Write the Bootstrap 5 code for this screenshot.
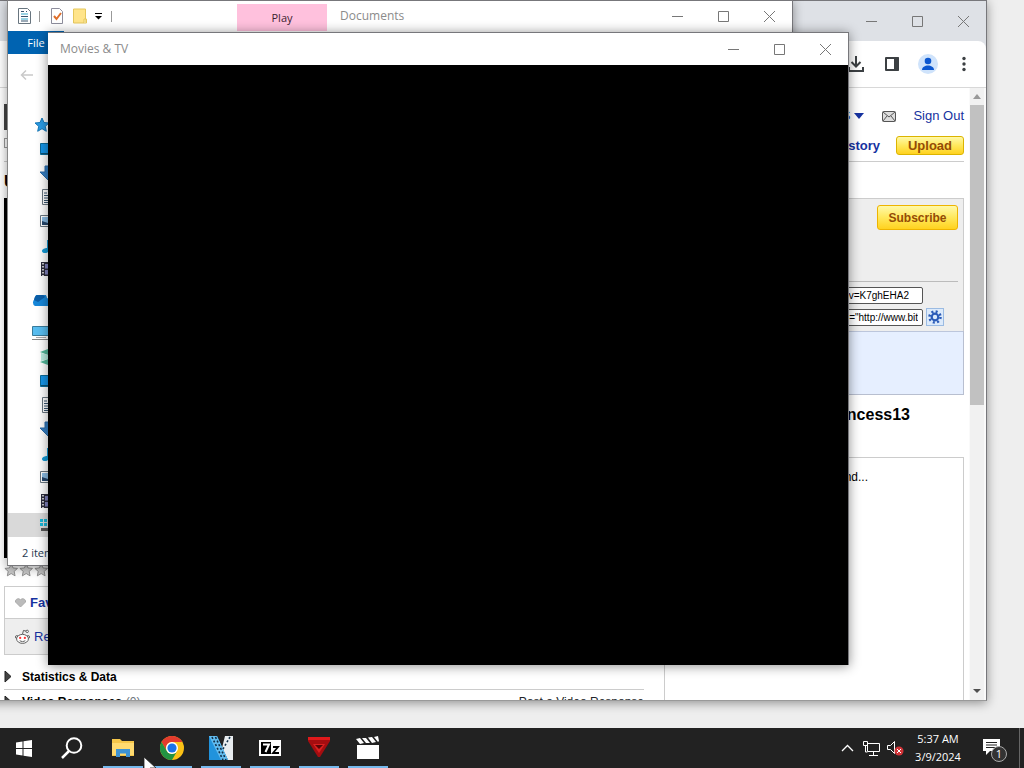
<!DOCTYPE html>
<html lang="en">
<head>
<meta charset="utf-8">
<meta name="viewport" content="width=device-width, initial-scale=1">
<title>Desktop</title>
<link rel="stylesheet" href="https://cdn.jsdelivr.net/npm/bootstrap@5.3.0/dist/css/bootstrap.min.css">
<style>
body{font-family:"Open Sans","Noto Sans",sans-serif;font-size:12px;line-height:16px;background:#eee;color:#000}
a{color:#1632a0;text-decoration:none}
.win{position:absolute;background:#fff;overflow:hidden;border:1px solid #77777b;box-shadow:0 2px 10px rgba(0,0,0,.4)}
.win-browser{left:-40px;top:0;width:1027px;height:701px;border-bottom-color:#999}
.win-files{left:7px;top:0;width:786px;height:566px;border-left-color:#888}
.win-movies{left:48px;top:32px;width:801px;height:633px;border-width:1px 1px 0 0;box-shadow:0 1px 11px rgba(0,0,0,.45)}
.ctl{width:46px;height:30px;border:0;background:none;padding:0;color:#777}
.ctl svg{display:block;margin:auto}
.title-text{color:#8b8b8b}
.movies-bar{height:32px}
/* browser */
.strip{height:40px;background:#dee1e6}
.tools{height:46px;background:#fff;border-radius:0 8px 0 0;padding-right:4px}
.tool{width:36px;height:36px;border:0;background:none;padding:0}
.page{font-family:"Liberation Sans",Arial,sans-serif;font-size:13px;border-top:1px solid #d8d8d8}
.page-body{padding:0 5px 0 43px}
.masthead{height:74px;border-bottom:1px solid #ccc}
.logo{width:90px;height:26px;background:#444;margin-top:16px}
.find{width:120px;height:10px;border:1px solid #999;margin-top:8px;padding:0}
.col-main{width:640px}
.col-side{width:300px}
.video{height:360px;background:#000}
.heading{font-size:16px;line-height:20px;height:36px;padding-top:10px}
.yellow{border:1px solid #dcb400;border-radius:3px;background:linear-gradient(#fff9a8,#ffe85c 50%,#ffd21f);color:#944b06;font-weight:700;padding:0;line-height:16px}
.upload{width:68px;height:19px}
.subscribe{width:81px;height:25px;font-size:12px;border-color:#eeb400}
.panel{margin-top:36px;border:1px solid #ccc;background:#eee}
.panel-top{height:83px;padding:6px 0 0;border-bottom:1px solid #bbb;margin-right:5px}
.codes{padding:5px 19px 5px 0}
.code{width:140px;height:17px;border:1px solid #555;border-radius:2px;font-size:10px;text-align:right;padding:0 4px 0 0;background:#fff;color:#000}
.code-link{padding-right:13px;margin-right:21px}
.embed{gap:3px;margin-top:4px}
.gear{width:18px;height:18px;border:1px solid #9bbbe2;background:#dceafb;padding:0}
.panel-blue{height:63px;border-top:1px solid #bcc6dc;background:#e6efff}
.panel-blue-wrap{margin:0 -1px -1px;border:1px solid #b8bfd0;border-top:0}
.name{font-size:16px;line-height:20px;padding:10px 54px 0 0;height:62px}
.box{border:1px solid #ccc;height:300px;font-size:12px;padding-top:11px;padding-left:163px}
.acts{border:1px solid #ccc}
.act{height:31px;padding-left:10px}
.act-grey{height:36px;background:#eee;border-top:1px solid #ccc}
.more{font-size:12px}
.stats{margin-top:6px;padding:8px 0 4px;border-bottom:1px solid #ccc}
.responses{padding-top:4px}
.stars{height:28px;padding-top:5px}
.track{width:17px;background:#f1f1f1;border-left:1px solid #fafafa;border-right:2px solid #fafafa}
.thumb{height:300px;background:#c1c1c1}
/* file explorer */
.quick{height:30px;padding-left:10px}
.check-icon{margin:0 10px 0 11px}
.sep{width:1px;height:11px;background:#999}
.play{width:90px;height:27px;background:#ffc1dd;color:#3d1f30;border:0;padding:0;font-size:11px}
.doc-title{width:327px;padding-left:13px}
.file-tab{width:56px;height:23px;background:#0063b1;color:#fff;border:0;padding:0;font-size:11px}
.back{height:59px;padding:12px 0 0 12px}
.tree{width:190px}
.tree .node{height:24px;padding-left:32px}
.tree .root{padding-left:24px}
.tree .chosen{background:#d9d9d9}
.status{padding:8px 0 0 14px;color:#26384f;font-size:11px}
.black{background:#000}
/* taskbar */
.bar{height:40px;background:#222;color:#fff;position:relative}
.tb{border:0;background:none;padding:0;color:#fff;display:flex;align-items:center;justify-content:center;height:40px}
.tb-sys{width:48px}
.apps{margin-left:2px}
.tb-app{width:49px;padding-left:1px}
.tb-app::after{content:"";position:absolute;bottom:0;width:40px;height:2px;background:#76b9ed}
.tb-tray{width:24px}
.clock{width:62px;font-size:11px;line-height:18px}
.tb-note{width:46px;padding:4px 0 0 5px}
.edge{width:5px;border-left:1px solid #666}
.pointer{position:absolute;left:143px;bottom:-8px;z-index:9}
</style>
</head>
<body>
<svg width="0" height="0" class="position-absolute" aria-hidden="true">
<defs>
<g id="doc"><path d="M1.500.5h8l3 3v12h-11z" fill="#fff" stroke="#68757f"/><path d="M3 4h3M3 6.500h8M3 9h8M3 11.500h8M7 4h3M3 13.500h8" stroke="#38556f"/></g>
<g id="desk"><path d="M.5 2.500h15v11H.5z" fill="#1695e8" stroke="#0b6a99"/><path d="M1 12.500h14" stroke="#0a5274"/></g>
<path id="down" d="M5 1h6v6h5l-8 8-8-8h5z" fill="#347fc4" stroke="#2869a7"/>
<g id="pic"><path d="M.5 2.500h15v11H.5z" fill="#fff" stroke="#68757f"/><path d="M2 4h12v8H2z" fill="#8bbce4"/><path d="M2 12V8l3 1 3 1 6-2v4z" fill="#24466c"/></g>
<path id="note" d="M7 3h2c0 4 5 3 5 8-1-3-3-3-5-3v5c0 4-7 4-7 1 0-2 3-3 5-3z" fill="#159bd7"/>
<g id="film"><path d="M0 1h16v14H0z" fill="#2b2b3b"/><path d="M4 3h8v4.500H4zM4 9h8v4.500H4z" fill="#8082bd"/><path d="M2 2v13M14 2v13" stroke="#fff" stroke-width="1.500" stroke-dasharray="1.500 1.500"/></g>
<path id="star" d="M8 1l2 4.500 5 .5-3.700 3.300 1 5L8 11.700 3.700 14.300l1-5L1 6l5-.5z"/>
<g id="min"><path d="M1 6.500h11"/></g><g id="max"><path d="M1.500 1.500h10v10h-10z"/></g><g id="cls"><path d="M1 1l11 11M12 1L1 12"/></g>
</defs>
</svg>

<div class="d-flex flex-column vh-100 overflow-hidden">
<main class="flex-grow-1 position-relative overflow-hidden">

<section class="win win-browser d-flex flex-column" aria-label="Browser">
  <div class="strip d-flex flex-shrink-0 justify-content-end align-items-center">
    <button class="ctl" aria-label="Minimize"><svg width="13" height="13" fill="none" stroke="currentColor"><use href="#min"/></svg></button>
    <button class="ctl" aria-label="Maximize"><svg width="13" height="13" fill="none" stroke="currentColor"><use href="#max"/></svg></button>
    <button class="ctl" aria-label="Close"><svg width="13" height="13" fill="none" stroke="currentColor"><use href="#cls"/></svg></button>
  </div>
  <div class="strip h-auto flex-shrink-0"><div class="tools d-flex justify-content-end align-items-center">
    <button class="tool" aria-label="Downloads"><svg width="20" height="20" fill="none" stroke="#3c4043" stroke-width="2"><path d="M10 2v10M5.500 8l4.500 4.500L14.500 8M3 13v4h14v-4"/></svg></button>
    <button class="tool" aria-label="Side panel"><svg width="20" height="20"><path d="M4 4h12v12H4z" fill="none" stroke="#3c4043" stroke-width="2" stroke-linejoin="round"/><path d="M12 3h4l1 1v12l-1 1h-4z" fill="#3c4043"/></svg></button>
    <button class="tool" aria-label="Profile"><svg width="20" height="20"><circle cx="10" cy="10" r="10" fill="#cfe3fb"/><circle cx="10" cy="7" r="3.300" fill="#0b57d0"/><path d="M4 16c0-3 3-4.500 6-4.500s6 1.500 6 4.500z" fill="#0b57d0"/></svg></button>
    <button class="tool" aria-label="Menu"><svg width="20" height="20" fill="#3c4043"><circle cx="10" cy="4.500" r="1.700"/><circle cx="10" cy="10" r="1.700"/><circle cx="10" cy="15.500" r="1.700"/></svg></button>
  </div></div>
  <div class="page d-flex flex-grow-1 overflow-hidden">
    <div class="page-body flex-grow-1 overflow-hidden">
      <header class="masthead d-flex justify-content-between">
        <div><div class="logo"></div><input class="find d-block" aria-label="Search"></div>
        <div>
          <div class="d-flex justify-content-end align-items-center pt-3 mt-1">
            <a href="#" class="me-1">S</a><svg width="12" height="6" class="me-3"><path d="M0 0h10L5 6z" fill="#1632a0"/></svg>
            <svg width="15" height="11" class="me-3"><rect x=".5" y=".5" width="13" height="10" rx="1" fill="#ddd" stroke="#555"/><path d="M1 1l6 5 6-5M1 10l4-5M13 10L9 5" fill="none" stroke="#555"/></svg>
            <a href="#">Sign Out</a>
          </div>
          <div class="d-flex justify-content-end align-items-center pt-2 mt-1 gap-3"><a href="#" class="fw-bold">History</a><button class="yellow upload">Upload</button></div>
        </div>
      </header>
      <div class="d-flex justify-content-between">
        <div class="col-main">
          <div class="heading fw-bold">U</div>
          <div class="video"></div>
          <div class="stars d-flex" aria-label="Rating">
            <svg width="15" height="16" fill="#ccc" stroke="#888"><use href="#star" transform="scale(.9)"/></svg><svg width="15" height="16" fill="#ccc" stroke="#888"><use href="#star" transform="scale(.9)"/></svg><svg width="15" height="16" fill="#ccc" stroke="#888"><use href="#star" transform="scale(.9)"/></svg>
          </div>
          <div class="acts">
            <div class="act d-flex align-items-center"><svg width="11" height="10" class="me-1"><path d="M5.500 9L.5 4C0 1 4-.5 5.500 2 7-.5 11 1 10.500 4z" fill="#bbb" stroke="#aaa"/></svg><a href="#" class="fw-semibold">Favorite</a></div>
            <div class="act act-grey d-flex align-items-center"><svg width="15" height="16" viewBox="0 0 16 16" class="me-1" fill="#fff" stroke="#555"><circle cx="2" cy="8" r="1.500"/><circle cx="14" cy="8" r="1.500"/><path d="M8 5l1-4 4 1" fill="none"/><circle cx="13" cy="2" r="1.300"/><ellipse cx="8" cy="10" rx="6.300" ry="4.800"/><circle cx="5.500" cy="9" r="1.200" fill="#f33" stroke="none"/><circle cx="10.500" cy="9" r="1.200" fill="#f33" stroke="none"/><path d="M5 12q3 2 6 0" fill="none"/></svg><a href="#">Reddit</a></div>
          </div>
          <div class="more stats d-flex align-items-center"><svg width="18" height="12"><path d="M1 0v11l6-5.500z" fill="#444" stroke="#222"/></svg><b>Statistics &amp; Data</b></div>
          <div class="more responses d-flex justify-content-between align-items-start"><div class="d-flex align-items-center"><svg width="18" height="12"><path d="M1 0v11l6-5.500z" fill="#444" stroke="#222"/></svg><b class="me-1">Video Responses</b> <span class="text-secondary">(0)</span></div><a href="#" class="text-dark">Post a Video Response</a></div>
        </div>
        <aside class="col-side">
          <div class="panel">
            <div class="panel-top text-end"><button class="yellow subscribe">Subscribe</button></div>
            <div class="codes">
              <div class="d-flex justify-content-end"><input class="code code-link" aria-label="URL" value="watch?v=K7ghEHA2"></div>
              <div class="embed d-flex align-items-center justify-content-end"><input class="code" aria-label="Embed" value="value=&quot;http://www.bit"><button class="gear" aria-label="Options"><svg width="14" height="14" class="d-block mx-auto" fill="none" stroke="#2b5bb8"><circle cx="7" cy="7" r="3.300" stroke-width="2.200"/><circle cx="7" cy="7" r="5.500" stroke-width="2.500" stroke-dasharray="2 2.320"/></svg></button></div>
            </div>
            <div class="panel-blue-wrap"><div class="panel-blue"></div></div>
          </div>
          <h2 class="name fw-bold m-0 text-end">princess13</h2>
          <div class="box">found...</div>
        </aside>
      </div>
    </div>
    <div class="track d-flex flex-column" aria-hidden="true">
      <svg width="14" height="17"><path d="M3 11h8L7 6z" fill="#999"/></svg><div class="thumb"></div><svg width="14" height="17" class="mt-auto"><path d="M3 6h8l-4 4z" fill="#505050"/></svg>
    </div>
  </div>
</section>

<section class="win win-files" aria-label="Documents">
  <div class="quick d-flex align-items-center">
    <svg width="13" height="16"><path d="M.5.500h9l3 3v12H.5z" fill="#fff" stroke="#68757f"/><path d="M3 3.500h3M3 8.500h7M3 13h7M8 3.500h1" stroke="#38556f"/><path d="M3 6h7M3 11h7" stroke="#36a9c9"/></svg>
    <span class="sep ms-2"></span>
    <svg width="12" height="16" class="check-icon"><path d="M.5.500h8l3 3v12H.5z" fill="#fff" stroke="#8d8d9c"/><path d="M3 8l2.500 3L10 5" fill="none" stroke="#df6f2c" stroke-width="2"/></svg>
    <svg width="14" height="16"><path d="M.5 1h12v10h1v4H.5z" fill="#ffe48a" stroke="#e5c75c"/><path d="M11 15v-4h2v4" fill="#fff2b5" stroke="#e5c75c"/></svg>
    <svg width="8" height="8" class="ms-2"><path d="M0 1.500h7" stroke="#000"/><path d="M0 4h7L3.500 7.500z"/></svg>
    <span class="sep ms-2"></span>
    <button class="play align-self-end ms-auto">Play</button>
    <span class="title-text doc-title">Documents</span>
    <button class="ctl" aria-label="Minimize"><svg width="13" height="13" fill="none" stroke="currentColor"><use href="#min"/></svg></button>
    <button class="ctl" aria-label="Maximize"><svg width="13" height="13" fill="none" stroke="currentColor"><use href="#max"/></svg></button>
    <button class="ctl" aria-label="Close"><svg width="13" height="13" fill="none" stroke="currentColor"><use href="#cls"/></svg></button>
  </div>
  <button class="file-tab d-block">File</button>
  <div class="back"><svg width="14" height="16" fill="none" stroke="#c9c9c9" stroke-width="1.500"><path d="M13 8H2M6 3.500L1.500 8 6 12.500"/></svg></div>
  <div class="tree">
    <div class="node root d-flex align-items-center"><svg width="19" height="16" fill="#2a9be4" stroke="#1678b8"><use href="#star" x="2"/></svg></div>
    <div class="node d-flex align-items-center"><svg width="16" height="16"><use href="#desk"/></svg></div>
    <div class="node d-flex align-items-center"><svg width="16" height="16"><use href="#down"/></svg></div>
    <div class="node d-flex align-items-center"><svg width="18" height="16"><use href="#doc" x="1"/></svg></div>
    <div class="node d-flex align-items-center"><svg width="16" height="16"><use href="#pic"/></svg></div>
    <div class="node d-flex align-items-center"><svg width="16" height="16"><use href="#note"/></svg></div>
    <div class="node d-flex align-items-center"><svg width="17" height="16"><use href="#film" x="1"/></svg></div>
    <div class="node root d-flex align-items-center mt-2"><svg width="20" height="12"><path d="M3 11a4 4 0 010-7 6 6 0 0112-1c5 1 5 8 1 8z" fill="#1687d9"/><path d="M2 5a6 6 0 0111-3L6 7z" fill="#0b5ea8"/></svg></div>
    <div class="node root d-flex align-items-center mt-2"><svg width="18" height="16"><path d="M.5 1.500h17v9H.5z" fill="#58bdf0" stroke="#397b9b"/><path d="M4 12.500h10" stroke="#aaa"/><path d="M0 14.500h18" stroke="#888"/></svg></div>
    <div class="node d-flex align-items-center"><svg width="16" height="16"><path d="M0 3l8-3 8 3-8 3zM0 13l8-3 8 3-8 3z" fill="#53b99b"/><path d="M1 4l7 2 7-2v8l-7-2-7 2z" fill="#b8ecdf"/></svg></div>
    <div class="node d-flex align-items-center"><svg width="16" height="16"><use href="#desk"/></svg></div>
    <div class="node d-flex align-items-center"><svg width="18" height="16"><use href="#doc" x="1"/></svg></div>
    <div class="node d-flex align-items-center"><svg width="16" height="16"><use href="#down"/></svg></div>
    <div class="node d-flex align-items-center"><svg width="16" height="16"><use href="#note"/></svg></div>
    <div class="node d-flex align-items-center"><svg width="16" height="16"><use href="#pic"/></svg></div>
    <div class="node d-flex align-items-center"><svg width="17" height="16"><use href="#film" x="1"/></svg></div>
    <div class="node chosen d-flex align-items-center"><svg width="16" height="16"><path d="M0 2h3v3H0zM4 2h3v3H4zM0 6h3v3H0zM4 6h3v3H4z" fill="#1bb4d4"/><path d="M1 11h15v3H1z" fill="#555"/></svg></div>
  </div>
  <div class="status">2 items</div>
</section>

<section class="win win-movies d-flex flex-column" aria-label="Movies &amp; TV">
  <div class="movies-bar d-flex align-items-center">
    <span class="title-text ps-2 ms-1 me-auto">Movies &amp; TV</span>
    <button class="ctl" aria-label="Minimize"><svg width="13" height="13" fill="none" stroke="currentColor"><use href="#min"/></svg></button>
    <button class="ctl" aria-label="Maximize"><svg width="13" height="13" fill="none" stroke="currentColor"><use href="#max"/></svg></button>
    <button class="ctl" aria-label="Close"><svg width="13" height="13" fill="none" stroke="currentColor"><use href="#cls"/></svg></button>
  </div>
  <div class="black flex-grow-1"></div>
</section>
</main>

<nav class="bar d-flex flex-shrink-0" aria-label="Taskbar">
  <button class="tb tb-sys" aria-label="Start"><svg width="16" height="17" fill="#fff"><path d="M0 2.500l6.500-1V8H0zM7.500 1.300L16 0v8H7.500zM0 9h6.500v6.500L0 14.500zM7.500 9H16v8l-8.500-1.300z"/></svg></button>
  <button class="tb tb-sys" aria-label="Search"><svg width="22" height="22" fill="none" stroke="#fff" stroke-width="2"><circle cx="13" cy="8.500" r="7.300"/><path d="M8 14l-7 7" stroke-width="2.500"/></svg></button>
  <div class="apps d-flex">
  <button class="tb tb-app" aria-label="File Explorer"><svg width="22" height="20"><path d="M0 1h8l2 2h12v15H0z" fill="#f5c64a"/><path d="M0 5h22v12H0z" fill="#ffda70"/><path d="M4 19v-8h14v8h-4v-3.500H8V19z" fill="#3e93d3"/></svg></button>
  <button class="tb tb-app" aria-label="Chrome"><svg width="24" height="24" viewBox="-12 -12 24 24"><circle r="12" fill="#fbc116"/><path d="M-10.400-6A12 12 0 0110.400-6H0A6 6 0 00-5.200 3z" fill="#e33b2e"/><path d="M-10.400-6A12 12 0 000 12L5.200 3A6 6 0 01-5.200 3z" fill="#229342"/><circle r="6" fill="#fff"/><circle r="4.600" fill="#1a73e8"/></svg></button>
  <button class="tb tb-app" aria-label="Video editor"><svg width="24" height="24"><path d="M16 0h8v24h-5l-6-12z" fill="#e8edf0"/><path d="M0 0h8l11 24H0z" fill="#2193dc"/><path d="M0 0h8l11 24h-7z" fill="#63bdf0"/><path d="M3 1l11 23M6.500 1l10.500 23M21 1l-7 12" stroke="#123049" stroke-width="1.600" stroke-dasharray="2 2"/></svg></button>
  <button class="tb tb-app" aria-label="7-Zip"><svg width="22" height="16"><path d="M0 0h22v16H0z" fill="#fff"/><path d="M2 2h10v12H2z" fill="#000"/><path d="M4 4.500h6L6.500 12" fill="none" stroke="#fff" stroke-width="2"/><path d="M14 7h5l-5 6h6" fill="none" stroke="#000" stroke-width="1.800"/></svg></button>
  <button class="tb tb-app" aria-label="Red triangle"><svg width="24" height="22"><path d="M1 0h22v4L13 20h-2L1 4z" fill="#a50d10"/><path d="M1 0h22v3H1z" fill="#e0191b"/><path d="M6 7h12l-6 9z" fill="#d92020"/><path d="M8 8h8l-4 4z" fill="#5a0507"/></svg></button>
  <button class="tb tb-app" aria-label="Movies and TV"><svg width="24" height="24" fill="#fff"><path d="M1 9h22v14H1zM0 3l4-1 4 5-4 1zM6 2h4l4 5h-4zM12 1.500l4-.5 4 5-4 1zM18 1l4-1 1 5-1 1z"/></svg></button>
  </div>
  <div class="d-flex ms-auto">
    <button class="tb tb-tray" aria-label="Hidden icons"><svg width="13" height="8" fill="none" stroke="#fff" stroke-width="1.300"><path d="M1 7l5.500-5.500L12 7"/></svg></button>
    <button class="tb tb-tray" aria-label="Network"><svg width="17" height="15" fill="none" stroke="#fff"><path d="M4.500 2.500h12v8h-12zM.5.500h4v4h-4zM2.500 5v6h2M10.500 11v3M6 14.500h9"/></svg></button>
    <button class="tb tb-tray" aria-label="Sound muted"><svg width="18" height="16"><path d="M1.500 5.500h3l4-4v12l-4-4h-3z" fill="none" stroke="#fff"/><circle cx="13" cy="11" r="4.500" fill="#d13438"/><path d="M11 9l4 4M15 9l-4 4" stroke="#fff"/></svg></button>
    <button class="tb clock text-center">5:37 AM<br>3/9/2024</button>
    <button class="tb tb-note me-1" aria-label="1 notification"><svg width="24" height="24"><path d="M0 1h17v12H7l-4 4v-4H0z" fill="#fff"/><path d="M3 4.500h11M3 7h11M3 9.500h11" stroke="#222"/><circle cx="16" cy="16" r="7.500" fill="#333" stroke="#aaa"/><text x="16" y="20" text-anchor="middle" font-size="11" fill="#fff">1</text></svg></button>
    <span class="edge"></span>
  </div>
  <svg class="pointer" width="14" height="20"><path d="M1 1v16l4-4 3 6 2-1-3-6h6z" fill="#fff" stroke="#222" stroke-width=".8"/></svg>
</nav>
</div>
<script src="https://cdn.jsdelivr.net/npm/bootstrap@5.3.0/dist/js/bootstrap.bundle.min.js"></script>
</body>
</html>
